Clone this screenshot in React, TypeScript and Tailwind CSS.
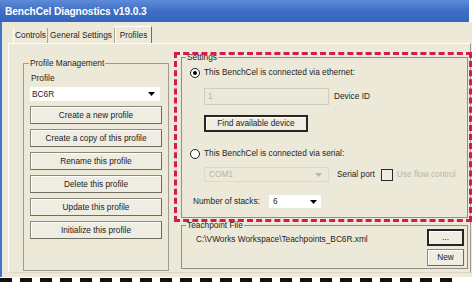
import React from 'react';

const Arrow = ({ color = '#000' }: { color?: string }) => (
	<svg width="7" height="4" viewBox="0 0 7 4">
		<polygon points="0,0 7,0 3.5,4" fill={color} />
	</svg>
);

const Radio = ({ checked }: { checked?: boolean }) => (
	<span className="w-[10px] h-[10px] rounded-full border border-[#1d1d1d] bg-white flex items-center justify-center shrink-0">
		{checked && <span className="w-[4px] h-[4px] rounded-full bg-black" />}
	</span>
);

const Btn = ({ label, strong }: { label: string; strong?: boolean }) => (
	<div
		className={
			strong
				? 'h-full w-full flex items-center justify-center bg-[#efede2] border-2 border-[#262626] shadow-[inset_1px_1px_0_#fff] text-[#222]'
				: 'h-full w-full flex items-center justify-center bg-[#efede2] border border-[#8a897c] border-r-[#6d6c61] border-b-[#6d6c61] shadow-[inset_1px_1px_0_#fff] text-[#222]'
		}
	>
		{label}
	</div>
);

const profileButtons = [
	'Create a new profile',
	'Create a copy of this profile',
	'Rename this profile',
	'Delete this profile',
	'Update this profile',
	'Initialize this profile',
];

const App: React.FC = () => {
	return (
		<div className="w-[476px] h-[282px] bg-white overflow-hidden relative font-['Liberation_Sans',Arial,sans-serif] text-[8.3px] leading-[11px] text-[#1e1e1e]">
			<div className="w-[472px] h-[277px] flex flex-col">
				{/* title bar */}
				<div className="h-[22px] mr-[3px] bg-linear-to-b from-[#5e8bd8] via-[#3f6ec6] to-[#3565bd] flex items-center pl-[5px]">
					<span className="text-white font-bold text-[10.2px] tracking-[-0.1px]">BenchCel Diagnostics v19.0.3</span>
				</div>

				<div className="flex-1 bg-[#ece9d8] border-l-2 border-[#4675c8] flex flex-col">
					{/* tabs */}
					<div className="flex items-end pt-[4px] pl-[11px] h-[21px]">
						<div className="h-[15px] w-[35px] flex items-center justify-center border-l border-white border-r border-r-[#a8a797]">Controls</div>
						<div className="h-[15px] w-[67px] flex items-center justify-center border-r border-[#a8a797]">General Settings</div>
						<div className="h-[17px] w-[37px] flex items-center justify-center border-l border-white border-r border-r-[#6f6e64] border-t border-t-white">Profiles</div>
					</div>

					{/* tab panel */}
					<div className="ml-[6px] w-[463px] h-[230px] border border-white border-r-[#9b9a8c] border-b-[#d8d6c6] flex items-start">
						{/* profile management */}
						<fieldset className="ml-[14px] mt-[14px] w-[145px] h-[213px] border border-[#9d9c8d] px-[6px] pt-[4px]">
							<legend className="-ml-[1px] px-[1px] leading-[11px]">Profile Management</legend>
							<div className="h-[11px] pl-[1px]">Profile</div>
							<div className="mt-[3px] h-[14px] w-[130px] bg-white flex items-center justify-between pl-[2px] pr-[5px]">
								<span>BC6R</span>
								<Arrow />
							</div>
							<div className="mt-[5px] flex flex-col gap-[5px] w-[132px]">
								{profileButtons.map((b) => (
									<div key={b} className="h-[18px]">
										<Btn label={b} />
									</div>
								))}
							</div>
						</fieldset>

						{/* right column */}
						<div className="ml-[12px] w-[287px] flex flex-col">
							<fieldset className="mt-[8px] h-[166px] border border-[#8f8e80] pl-[8px] pt-[4px]">
								<legend className="-ml-[4px] px-[1px] leading-[11px]">Settings</legend>
								<div className="h-[11px] flex items-center gap-[4px]">
									<Radio checked />
									<span>This BenchCel is connected via ethernet:</span>
								</div>
								<div className="mt-[10px] ml-[14px] h-[17px] flex items-center">
									<div className="w-[125px] h-full border border-[#cfcdbd] bg-[#ece9d8] flex items-center pl-[3px] text-[#b3b1a2]">1</div>
									<span className="ml-[5px]">Device ID</span>
								</div>
								<div className="mt-[10px] ml-[14px] w-[104px] h-[17px]">
									<Btn label="Find available device" strong />
								</div>
								<div className="mt-[16px] h-[11px] flex items-center gap-[4px]">
									<Radio />
									<span>This BenchCel is connected via serial:</span>
								</div>
								<div className="mt-[8px] ml-[14px] h-[15px] flex items-center">
									<div className="w-[125px] h-full border border-[#dcdacb] bg-[#ece9d8] flex items-center justify-between pl-[4px] pr-[6px] text-[#b8b6a7]">
										<span>COM1</span>
										<Arrow color="#b8b6a7" />
									</div>
									<span className="ml-[8px]">Serial port</span>
									<span className="ml-[6px] w-[12px] h-[12px] border-[1.5px] border-[#2a2a2a] bg-[#efede2]" />
									<span className="ml-[4px] text-[#b8b6a7]">Use flow control</span>
								</div>
								<div className="mt-[13px] ml-[3px] h-[13px] flex items-center">
									<span className="w-[76px]">Number of stacks:</span>
									<div className="w-[52px] h-full bg-white flex items-center justify-between pl-[4px] pr-[4px]">
										<span>6</span>
										<Arrow />
									</div>
								</div>
							</fieldset>

							<fieldset className="mt-[2px] h-[49px] border border-[#8f8e80] pl-[14px] pr-[3px] flex">
								<legend className="-ml-[10px] px-[1px] leading-[11px]">Teachpoint File</legend>
								<div className="flex items-start justify-between w-full">
									<span className="mt-[3px]">C:\VWorks Workspace\Teachpoints_BC6R.xml</span>
									<div className="-mt-[2px] flex flex-col gap-[3px] w-[37px]">
										<div className="h-[17px]">
											<Btn label="..." strong />
										</div>
										<div className="h-[17px]">
											<Btn label="New" />
										</div>
									</div>
								</div>
							</fieldset>
						</div>
					</div>
				</div>
			</div>

			{/* dashed annotation lines */}
			<div className="absolute left-[174px] top-[52px] w-[298px] h-[170px] border-[3px] border-dashed border-[#d51a52]" />
			<div className="absolute left-0 top-[278px] w-[452px] h-[4px] bg-[repeating-linear-gradient(90deg,#111_0_12px,transparent_12px_20px)]" />
		</div>
	);
};

export default App;
